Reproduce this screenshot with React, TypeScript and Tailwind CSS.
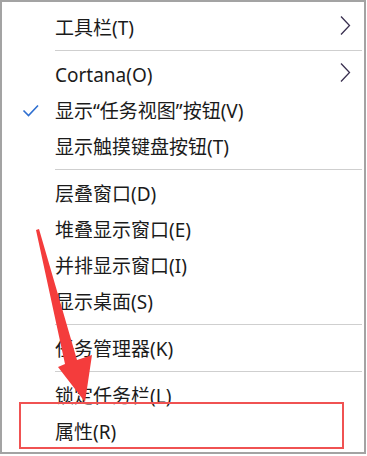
import { Fragment } from 'react'

type Item = { label: string; sub?: boolean; checked?: boolean }

const groups: Item[][] = [
  [{ label: '工具栏(T)', sub: true }],
  [
    { label: 'Cortana(O)', sub: true },
    { label: '显示“任务视图”按钮(V)', checked: true },
    { label: '显示触摸键盘按钮(T)' }
  ],
  [
    { label: '层叠窗口(D)' },
    { label: '堆叠显示窗口(E)' },
    { label: '并排显示窗口(I)' },
    { label: '显示桌面(S)' }
  ],
  [{ label: '任务管理器(K)' }],
  [{ label: '锁定任务栏(L)' }, { label: '属性(R)' }]
]

const Check = () => (
  <svg width="18" height="14" viewBox="0 0 18 14" className="absolute left-[20px]">
    <path d="M1.5 6.5 L6.5 11.5 L16 1.5" fill="none" stroke="#2f6fd0" strokeWidth="1.6" />
  </svg>
)

const Chevron = () => (
  <svg width="12" height="21" viewBox="0 0 12 21" className="absolute left-[337px] -mt-[5px]">
    <path d="M2 1.5 L10.5 10.5 L2 19.5" fill="none" stroke="#3a3050" strokeWidth="1.3" />
  </svg>
)

const App = () => {
  return (
    <div className="relative w-[366px] h-[454px] border-2 border-[#a3a3a3] bg-white pt-[8px] text-[19px] text-[#1b1b1b] font-['Noto_Sans','Noto_Sans_CJK_SC',sans-serif]">
      {groups.map((group, gi) => (
        <Fragment key={gi}>
          {gi > 0 && (
            <div className="pt-[4px] pb-[6px] pl-[53px] pr-[2px]">
              <div className="h-px bg-[#cfcfcf]" />
            </div>
          )}
          {group.map((item) => (
            <div key={item.label} className="relative h-9 flex items-center pl-[53px]">
              {item.checked && <Check />}
              <span className="leading-none">{item.label}</span>
              {item.sub && <Chevron />}
            </div>
          ))}
        </Fragment>
      ))}

      {/* annotation: red box and arrow */}
      <div className="absolute left-[17px] top-[400px] w-[325px] h-[47px] border-2 border-[#f05252]" />
      <svg className="absolute -left-[2px] -top-[2px]" width="367" height="456" viewBox="0 0 367 456">
        <polygon points="36,230 39,229 77,360 92,355 85,402 58,367 65,364" fill="#f43c3c" />
      </svg>
    </div>
  )
}

export default App
